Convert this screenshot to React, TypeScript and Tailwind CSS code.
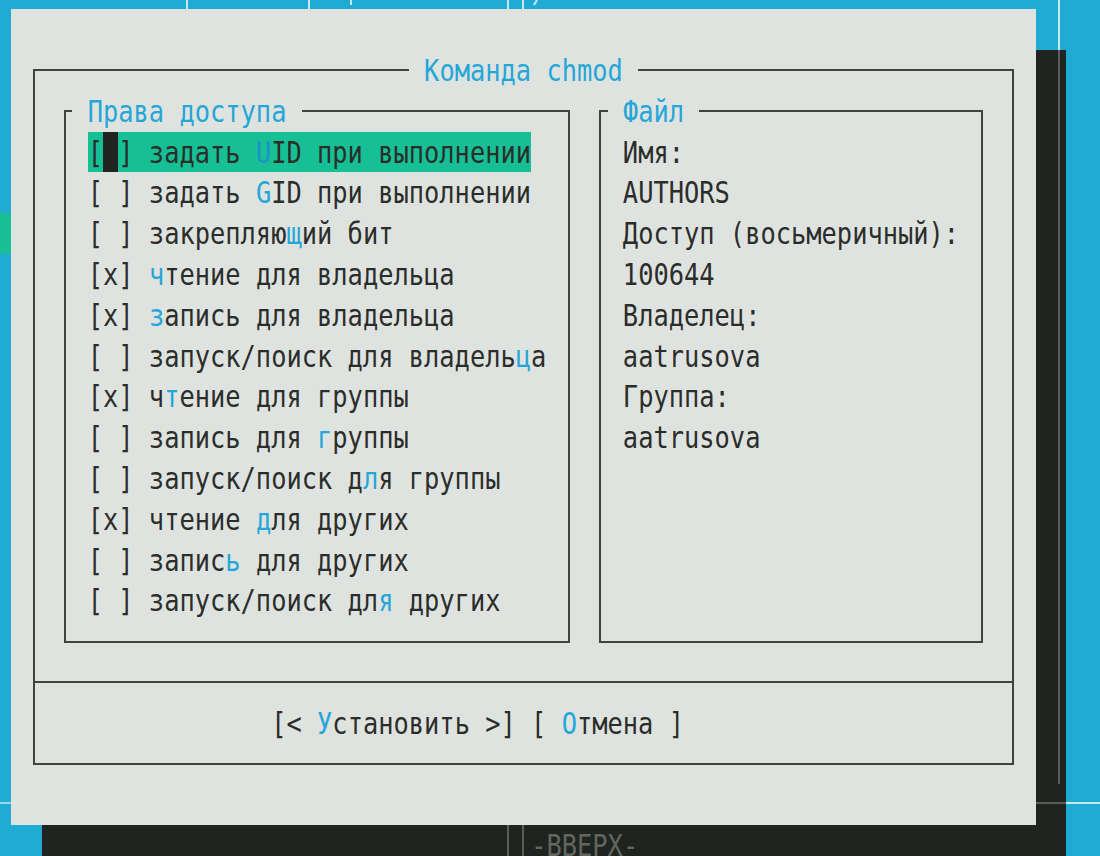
import React from "react";

type TP = { children: React.ReactNode; className?: string };

const T = ({ children, className = "" }: TP) => (
  <span className={"inline-block whitespace-pre leading-[40.8px] scale-y-[1.22] " + className}>{children}</span>
);

const Hot = ({ children }: { children: React.ReactNode }) => (
  <span className="text-[#25a6d8]">{children}</span>
);

const perms = [
  { box: " ", pre: "задать ", hot: "U", post: "ID при выполнении" },
  { box: " ", pre: "задать ", hot: "G", post: "ID при выполнении" },
  { box: " ", pre: "закрепляю", hot: "щ", post: "ий бит" },
  { box: "x", pre: "", hot: "ч", post: "тение для владельца" },
  { box: "x", pre: "", hot: "з", post: "апись для владельца" },
  { box: " ", pre: "запуск/поиск для владель", hot: "ц", post: "а" },
  { box: "x", pre: "ч", hot: "т", post: "ение для группы" },
  { box: " ", pre: "запись для ", hot: "г", post: "руппы" },
  { box: " ", pre: "запуск/поиск д", hot: "л", post: "я группы" },
  { box: "x", pre: "чтение ", hot: "д", post: "ля других" },
  { box: " ", pre: "запис", hot: "ь", post: " для других" },
  { box: " ", pre: "запуск/поиск дл", hot: "я", post: " других" },
];

const fileInfo = [
  "Имя:",
  "AUTHORS",
  "Доступ (восьмеричный):",
  "100644",
  "Владелец:",
  "aatrusova",
  "Группа:",
  "aatrusova",
];

function BoxHeader({ title }: { title: string }) {
  return (
    <div className="-mt-[19.4px] -mx-[2px] h-[40.8px] flex items-center">
      <div className="w-[8.66px] h-[2px] bg-[#404340]" />
      <div className="px-[15.29px] h-[40.8px] flex items-center text-[#25a6d8]">
        <T>{title}</T>
      </div>
      <div className="flex-1 h-[2px] bg-[#404340]" />
    </div>
  );
}

export default function App() {
  return (
    <div className="relative w-[1100px] h-[856px] overflow-hidden bg-[#1fabd4] text-[25.4px] text-[#2b2d2b] font-['DejaVu_Sans_Mono',monospace]">
      {/* panel behind the dialog: shadow and fragments of its lines */}
      <div className="absolute left-[41.9px] top-[50.1px] w-[1024.5px] h-[816px] bg-[#1f2420]" />
      <div className="absolute left-[185.7px] top-0 w-[2px] h-[10px] bg-[#c6e8f2]" />
      <div className="absolute left-[308px] top-0 w-[2px] h-[10px] bg-[#c6e8f2]" />
      <div className="absolute left-[350px] top-0 w-[2px] h-[5px] bg-[#c6e8f2]" />
      <div className="absolute left-[507.3px] top-0 w-[2px] h-[10px] bg-[#c6e8f2]" />
      <div className="absolute left-[522.3px] top-0 w-[2px] h-[10px] bg-[#c6e8f2]" />
      <svg className="absolute left-[531px] top-0" width="8" height="6" viewBox="0 0 8 6">
        <line x1="6" y1="0" x2="3" y2="5" stroke="#c6e8f2" strokeWidth="2" />
      </svg>
      <div className="absolute left-[1057.7px] top-0 w-[2px] h-[50.1px] bg-[#c6e8f2]" />
      <div className="absolute left-[1057.7px] top-[50.1px] w-[2px] h-[734px] bg-[#5a5e5a]" />
      <div className="absolute left-0 top-[802px] w-[12px] h-[2px] bg-[#9fd8ea]" />
      <div className="absolute left-[1035px] top-[802px] w-[31.4px] h-[2px] bg-[#5a5e5a]" />
      <div className="absolute left-[1066.4px] top-[802px] w-[34px] h-[2px] bg-[#c6e8f2]" />
      <div className="absolute left-0 top-[213.3px] w-[12px] h-[40.8px] bg-[#17bf94]" />
      <div className="absolute left-[507.3px] top-[825px] w-[2px] h-[31px] bg-[#5a5e5a]" />
      <div className="absolute left-[522.3px] top-[825px] w-[2px] h-[31px] bg-[#5a5e5a]" />
      <div className="absolute left-[531.2px] top-[825.3px] h-[40.8px] flex items-center text-[#62665f]">
        <T>-ВВЕРХ-</T>
      </div>

      {/* dialog */}
      <div className="absolute left-[11.3px] top-[9.3px] w-[1024.4px] h-[816px] bg-[#dfe3df] pl-[21.9px] pt-[60.2px]">
        <div className="w-[980.6px] h-[695.6px] border-x-2 border-b-2 border-[#404340] flex flex-col">
          <div className="-mt-[19.4px] -mx-[2px] h-[40.8px] flex items-center">
            <div className="flex-1 h-[2px] bg-[#404340]" />
            <div className="w-[229.35px] h-[40.8px] flex items-center justify-center text-[#25a6d8]">
              <T>Команда chmod</T>
            </div>
            <div className="flex-1 h-[2px] bg-[#404340]" />
          </div>

          <div className="mt-[19.4px] flex pl-[28.6px] gap-[28.6px]">
            <div className="w-[506.6px] h-[532.4px] border-x-2 border-b-2 border-[#404340] flex flex-col">
              <BoxHeader title="Права доступа" />
              <div className="pl-[21.95px] flex flex-col">
                {perms.map((p, i) =>
                  i === 0 ? (
                    <div key={i} className="h-[40.8px] w-fit flex items-center bg-[#17bf94]">
                      <T>[</T>
                      <span className="inline-block w-[15.29px] h-[40.8px] bg-[#1f2420]" />
                      <T>
                        {"] " + p.pre}
                        <span className="text-[#1e8fc9]">{p.hot}</span>
                        {p.post}
                      </T>
                    </div>
                  ) : (
                    <div key={i} className="h-[40.8px] flex items-center">
                      <T>
                        {"[" + p.box + "] " + p.pre}
                        <Hot>{p.hot}</Hot>
                        {p.post}
                      </T>
                    </div>
                  )
                )}
              </div>
            </div>

            <div className="w-[384.2px] h-[532.4px] border-x-2 border-b-2 border-[#404340] flex flex-col">
              <BoxHeader title="Файл" />
              <div className="pl-[21.9px] flex flex-col">
                {fileInfo.map((line, i) => (
                  <div key={i} className="h-[40.8px] flex items-center">
                    <T>{line}</T>
                  </div>
                ))}
              </div>
            </div>
          </div>

          <div className="mt-[38.8px] h-[2px] bg-[#404340]" />

          <div className="mt-[19.4px] pl-[236px] h-[40.8px] flex items-center">
            <T>
              {"[< "}
              <Hot>У</Hot>
              {"становить >] [ "}
              <Hot>О</Hot>
              {"тмена ]"}
            </T>
          </div>
        </div>
      </div>
    </div>
  );
}
